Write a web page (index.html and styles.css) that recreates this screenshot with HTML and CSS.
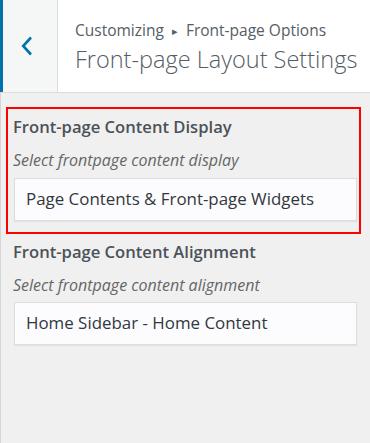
FILE: index.html
```html
<!DOCTYPE html>
<html>
    <head>
        <meta charset="utf-8">
        <link rel="stylesheet" href="styles.css">
    </head>
    <body>
        <div class="panel">
            <div class="head">
                <div class="back">
                    <svg width="14" height="22" viewBox="0 0 14 22">
                        <path d="M11 2.5 L3.2 11 L11 19.5" fill="none" stroke="#0073aa" stroke-width="2.6"/>
                    </svg>
                </div>
                <div class="titles">
                    <div class="crumb">Customizing <span class="sep">&#9656;</span> Front-page Options</div>
                    <div class="title">Front-page Layout Settings</div>
                </div>
            </div>

            <div class="controls">
                <div class="control marked">
                    <div class="label">Front-page Content Display</div>
                    <div class="desc">Select frontpage content display</div>
                    <div class="select">Page Contents &amp; Front-page Widgets</div>
                </div>
                <div class="control">
                    <div class="label">Front-page Content Alignment</div>
                    <div class="desc">Select frontpage content alignment</div>
                    <div class="select">Home Sidebar - Home Content</div>
                </div>
            </div>
        </div>
    </body>
</html>
```

FILE: styles.css
```css
*{
    box-sizing: border-box;
    margin: 0px;
    padding: 0px;
}
body
{
    background-color: #f0f0f0;
    font-family: "Open Sans", "Noto Sans", sans-serif;
}
.panel
{
    height: 100vh;
    border-left: 1px solid #d4d4d4;
}
.head
{
    display: flex;
    height: 93px;
    margin-left: -1px;
    background-color: #fff;
    border-bottom: 1px solid #ddd;
}
.back
{
    width: 58px;
    border-left: 3px solid #0073aa;
    border-right: 1px solid #ddd;
    background-color: #f5f6f6;
    display: flex;
    align-items: center;
    justify-content: center;
    padding-right: 6px;
}
.titles
{
    padding: 19px 0 0 17px;
    color: #555d66;
    white-space: nowrap;
}
.crumb
{
    font-size: 15.5px;
    line-height: 22px;
}
.sep
{
    font-size: 11px;
    margin: 0 4px;
    vertical-align: 1px;
}
.title
{
    font-size: 23.5px;
    font-weight: 300;
    line-height: 30px;
    margin-top: 2px;
}
.controls
{
    padding: 14px 9px 0 5px;
}
.control
{
    padding: 5px 2px 10px 5px;
    border: 2px solid transparent;
}
.control.marked
{
    padding-top: 7px;
    padding-bottom: 11px;
    border-color: #f00;
}
.label
{
    font-size: 16.6px;
    font-weight: 600;
    line-height: 22px;
    color: #4c5258;
    white-space: nowrap;
}
.desc
{
    font-size: 16px;
    font-style: italic;
    line-height: 22px;
    color: #666;
    margin-top: 11px;
    white-space: nowrap;
}
.select
{
    margin: 6px 0 0 1px;
    height: 43px;
    background-color: #fcfcfe;
    border: 1px solid #ddd;
    box-shadow: 0 1px 1px rgba(0,0,0,0.05);
    font-size: 16.9px;
    line-height: 39px;
    color: #32373c;
    padding-left: 11px;
    white-space: nowrap;
}
.marked .select
{
    margin-top: 7px;
}
```
